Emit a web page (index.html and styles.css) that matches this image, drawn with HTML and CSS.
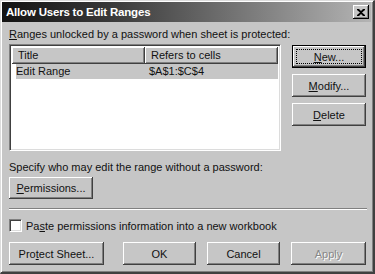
FILE: index.html
```html
<!DOCTYPE html>
<html lang="en">
<head>
  <meta charset="UTF-8" />
  <title>Allow Users to Edit Ranges</title>
  <link rel="stylesheet" href="styles.css">
</head>
<body>

<div class="window">
  <div class="titlebar">
    <span class="title">Allow Users to Edit Ranges</span>
    <button class="close" title="Close">
      <svg width="8" height="7" viewBox="0 0 8 7">
        <path d="M0 0h2l2 2 2-2h2v1L5 3.5 8 6v1H6L4 5 2 7H0V6l3-2.5L0 1z" fill="#000"/>
      </svg>
    </button>
  </div>

  <div class="content">
    <div class="label"><u>R</u>anges unlocked by a password when sheet is protected:</div>

    <div class="top-row">
      <div class="listbox">
        <div class="list-head">
          <div class="col-head col-title">Title</div>
          <div class="col-head col-ref">Refers to cells</div>
        </div>
        <div class="list-row selected">
          <div class="cell col-title">Edit Range</div>
          <div class="cell col-ref">$A$1:$C$4</div>
        </div>
      </div>

      <div class="side-buttons">
        <button class="btn default"><span class="focus"><u>N</u>ew...</span></button>
        <button class="btn"><u>M</u>odify...</button>
        <button class="btn"><u>D</u>elete</button>
      </div>
    </div>

    <div class="label specify">Specify who may edit the range without a password:</div>
    <button class="btn perm"><u>P</u>ermissions...</button>

    <div class="separator"></div>

    <label class="check-row">
      <span class="checkbox"></span>
      <span>Pa<u>s</u>te permissions information into a new workbook</span>
    </label>

    <div class="bottom-buttons">
      <button class="btn protect">Pro<u>t</u>ect Sheet...</button>
      <button class="btn">OK</button>
      <button class="btn">Cancel</button>
      <button class="btn disabled">Apply</button>
    </div>
  </div>
</div>

</body>
</html>
```

FILE: styles.css
```css
body {
  margin: 0;
  background: #c6c6c6;
  font-family: "Liberation Sans", Arial, sans-serif;
  font-size: 11px;
  color: #111;
}

u {
  text-decoration: underline;
  text-underline-offset: 1px;
}

.window {
  width: 375px;
  height: 274px;
  box-sizing: border-box;
  background: #c6c6c6;
  border-top: 1px solid #dcdcdc;
  border-left: 1px solid #dcdcdc;
  border-right: 2px solid #404040;
  border-bottom: 2px solid #404040;
  box-shadow: inset 1px 1px #fff, inset -1px -1px #808080;
}

.titlebar {
  height: 20px;
  margin: 1px 2px 0 1px;
  background: linear-gradient(to right, #121212, #3a3a3a 30%, #b4b4b4);
  display: flex;
  align-items: center;
  justify-content: space-between;
  padding: 0 2px 0 4px;
}

.title {
  color: #fff;
  font-weight: bold;
  font-size: 11.5px;
  letter-spacing: -0.2px;
}

.close {
  width: 16px;
  height: 14px;
  padding: 0;
  border: none;
  background: #c6c6c6;
  box-shadow: inset -1px -1px #000, inset 1px 1px #fff, inset -2px -2px #808080;
  display: flex;
  align-items: center;
  justify-content: center;
}

.content {
  padding: 5px 7px 0 8px;
}

.label {
  height: 14px;
  line-height: 14px;
}

.top-row {
  display: flex;
  gap: 11px;
  margin-top: 3px;
}

.listbox {
  width: 272px;
  height: 107px;
  box-sizing: border-box;
  background: #fff;
  border-top: 1px solid #808080;
  border-left: 1px solid #808080;
  border-right: 1px solid #fff;
  border-bottom: 1px solid #fff;
  box-shadow: inset 1px 1px #404040, inset -1px -1px #dcdcdc;
  padding: 2px;
}

.list-head {
  display: flex;
  height: 17px;
}

.col-head {
  box-sizing: border-box;
  height: 17px;
  line-height: 16px;
  padding-left: 6px;
  background: #c6c6c6;
  box-shadow: inset -1px -1px #404040, inset 1px 1px #fff, inset -2px -2px #808080;
}

.col-title {
  width: 134px;
}

.col-ref {
  width: 134px;
}

.list-row {
  display: flex;
  height: 15px;
  line-height: 15px;
  margin-left: 4px;
}

.list-row .col-title {
  width: 134px;
}

.list-row .col-ref {
  width: 130px;
}

.list-row.selected {
  background: #c6c6c6;
}

.side-buttons {
  display: flex;
  flex-direction: column;
  gap: 6px;
  padding-top: 1px;
}

.btn {
  font-family: inherit;
  font-size: 11px;
  color: #111;
  width: 73px;
  height: 23px;
  padding: 0;
  border: none;
  background: #c6c6c6;
  box-shadow: inset -1px -1px #404040, inset 1px 1px #fff, inset -2px -2px #808080;
}

.side-buttons .btn {
  width: 74px;
}

.btn.default {
  box-shadow: inset 0 0 0 1px #000, inset -2px -2px #404040, inset 2px 2px #fff, inset -3px -3px #808080;
  display: flex;
  padding: 4px;
}

.focus {
  flex: 1;
  border: 1px dotted #000;
  display: flex;
  align-items: center;
  justify-content: center;
}

.specify {
  margin-top: 9px;
}

.perm {
  width: 84px;
  height: 22px;
  margin-top: 3px;
}

.separator {
  height: 0;
  margin-top: 9px;
  width: 358px;
  border-top: 1px solid #808080;
  border-bottom: 1px solid #fff;
}

.check-row {
  display: flex;
  align-items: center;
  gap: 4px;
  margin-top: 9px;
  height: 13px;
}

.checkbox {
  width: 13px;
  height: 13px;
  box-sizing: border-box;
  background: #fff;
  border-top: 1px solid #808080;
  border-left: 1px solid #808080;
  border-right: 1px solid #fff;
  border-bottom: 1px solid #fff;
  box-shadow: inset 1px 1px #404040, inset -1px -1px #dcdcdc;
}

.bottom-buttons {
  display: flex;
  gap: 11px;
  margin-top: 10px;
}

.btn.protect {
  width: 95px;
  margin-right: 8px;
}

.btn.disabled {
  color: #888;
  text-shadow: 1px 1px #fff;
  width: 75px;
}
```
